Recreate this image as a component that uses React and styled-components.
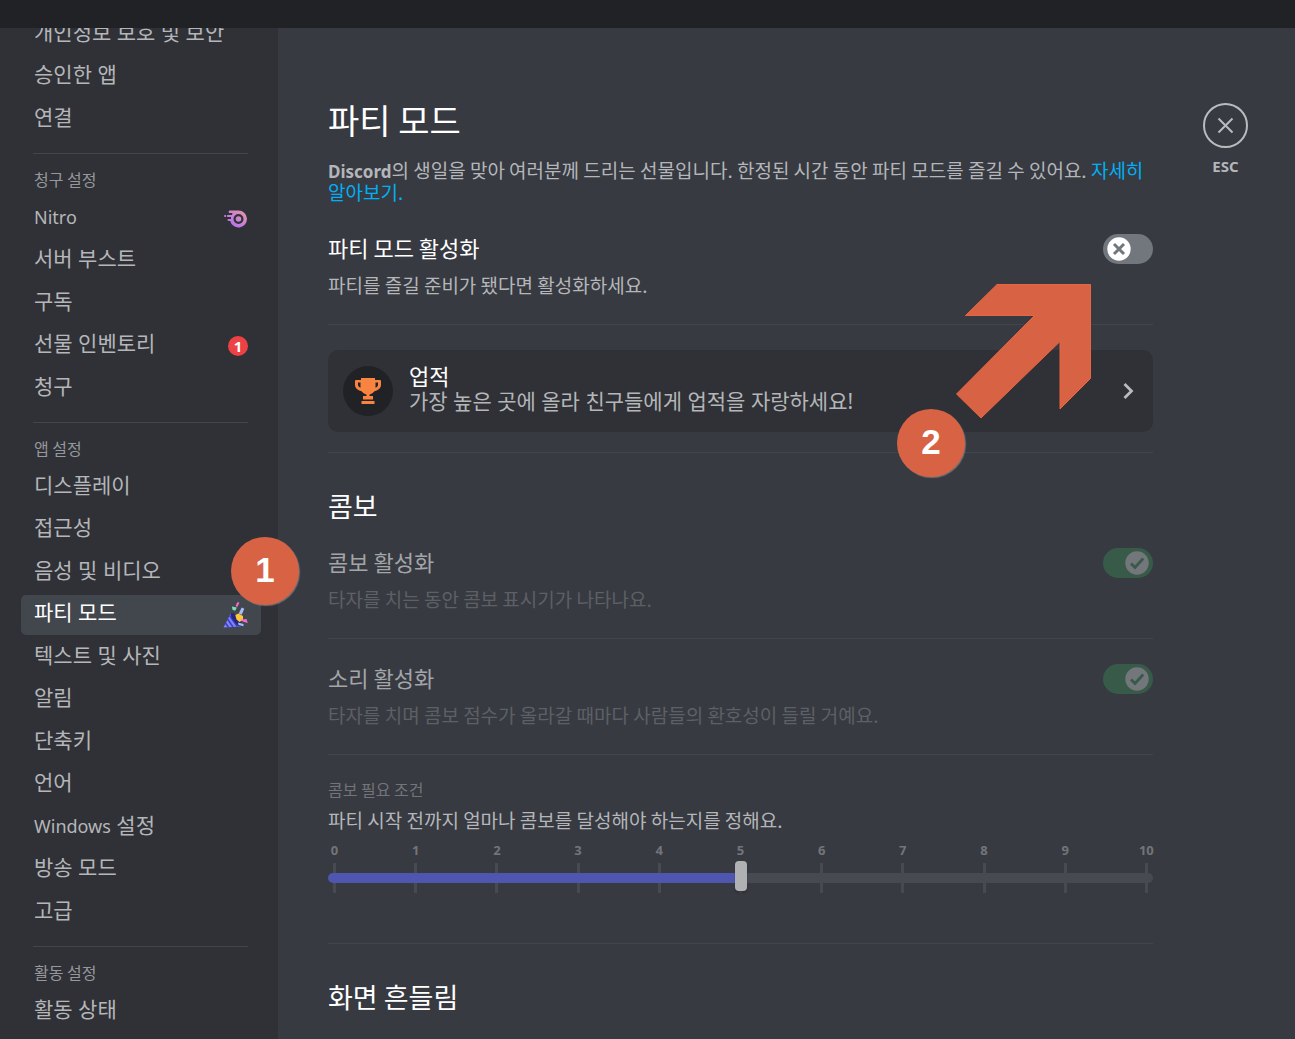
import React, { useState } from "react";
import styled, { createGlobalStyle, css } from "styled-components";

const billing = [
  { latin: "Nitro", icon: "nitro" },
  { label: "서버 부스트" },
  { label: "구독" },
  { label: "선물 인벤토리", count: 1 },
  { label: "청구" },
];

const appSettings = [
  { label: "디스플레이" },
  { label: "접근성" },
  { label: "음성 및 비디오" },
  { label: "파티 모드", icon: "party", selected: true },
  { label: "텍스트 및 사진" },
  { label: "알림" },
  { label: "단축키" },
  { label: "언어" },
  { latin: "Windows", label: " 설정" },
  { label: "방송 모드" },
  { label: "고급" },
];

const groups = [
  {
    items: [
      { label: "개인정보 보호 및 보안" },
      { label: "승인한 앱" },
      { label: "연결" },
    ],
  },
  { title: "청구 설정", items: billing },
  { title: "앱 설정", items: appSettings },
  { title: "활동 설정", items: [{ label: "활동 상태" }] },
];

const steps = [0, 1, 2, 3, 4, 5, 6, 7, 8, 9, 10];

const NitroIcon = () => (
  <svg width="24" height="18" viewBox="0 0 24 18" aria-hidden="true">
    <defs>
      <linearGradient id="nitro" x1="0" y1="1" x2="1" y2="0">
        <stop offset="0.2" stopColor="#b473f5" />
        <stop offset="0.9" stopColor="#e292aa" />
      </linearGradient>
    </defs>
    <path
      fill="url(#nitro)"
      fillRule="evenodd"
      d="M5.500 0.500H14.500a8.500 8.500 0 1 1-8.300 10.500H4.500a1 1 0 0 1 0-2H7V7H3.800a1 1 0 0 1 0-2H8L8.500 3H6.500a1.200 1.200 0 0 1-1-2.500zM14.500 4a5 5 0 1 0 0 10a5 5 0 0 0 0-10zM14.500 6.200a2.800 2.800 0 1 1 0 5.600a2.800 2.800 0 0 1 0-5.600zM0.300 5h1.700v2H0.300z"
    />
  </svg>
);

const PartyIcon = () => (
  <svg width="25" height="26" viewBox="0 0 25 26" aria-hidden="true">
    <path d="M8 11L18 24.500L0.500 25.500z" fill="#8084ff" />
    <path
      d="M6.500 13.500l8 11.300M4.500 17l5.500 8M2.500 21l3 4.300"
      stroke="#3f41c4"
      strokeWidth="1.700"
    />
    <path d="M8 11c2-.5 5 1.500 7.500 5s3.800 7 2.500 8.500c-2 .5-4.500-1.500-7-5S7 12.500 8 11z" fill="#25277c" />
    <path d="M12.300 13l3-1.500 4.700 2.500v4l-3.500 2-3-2.500z" fill="#fdc73a" />
    <path d="M15.700 11.500l3-6 2.600 1.200-2.600 6z" fill="#a4bdf8" />
    <path d="M12.500 4l2-4 2 .8-2.200 4.200z" fill="#f26bd0" />
    <path d="M9 4.500l4.800 1-1.600 3.200-2.700-1z" fill="#7ee0b8" />
    <path d="M17 17.800l6.500-.8 1.300 4-4.500-1.200z" fill="#f26bd0" />
    <path d="M15 20.500l5.500 1.500v2.200l-5-1.200z" fill="#a4bdf8" />
  </svg>
);

const TrophyIcon = () => (
  <svg width="26" height="26" viewBox="0 0 26 26" aria-hidden="true">
    <path
      fill="#f98441"
      fillRule="evenodd"
      d="M6 0h14v2h5a1 1 0 0 1 1 1v4c0 3-2.500 5-6.500 6.200C18.300 14.800 16.500 16 14.500 16.600V18h3.500v3.500H8V18h3.500v-1.400C9.500 16 7.700 14.800 6.500 13.200C2.500 12 0 10 0 7V3a1 1 0 0 1 1-1h5zM3 4.500V7c0 1 1 2 2.500 2.800V4.500zM23 4.500h-2.500v5.300C22 9 23 8 23 7zM6.500 23h13v3h-13z"
    />
  </svg>
);

const icons = { nitro: <NitroIcon />, party: <PartyIcon /> };

const Switch = ({ id, checked, onChange, disabled }) => (
  <SwitchBox $faded={disabled}>
    <SwitchInput
      id={id}
      type="checkbox"
      role="switch"
      checked={checked}
      onChange={onChange}
      disabled={disabled}
    />
    <Knob viewBox="0 0 24 24" $on={checked} aria-hidden="true">
      <circle cx="12" cy="12" r="11.700" fill="#fff" />
      {checked ? (
        <path d="M6 12.500l4 4L18.200 7.500" fill="none" stroke="#3ba55c" strokeWidth="2.800" />
      ) : (
        <path d="M7 7l10 10M17 7l-10 10" stroke="#72767d" strokeWidth="3" />
      )}
    </Knob>
  </SwitchBox>
);

const ToggleRow = ({ id, title, text, checked, onChange, disabled }) => (
  <Row>
    <RowHead>
      <RowTitle htmlFor={id} $dim={disabled}>{title}</RowTitle>
      <Switch id={id} checked={checked} onChange={onChange} disabled={disabled} />
    </RowHead>
    <RowText $dim={disabled}>{text}</RowText>
  </Row>
);

const App = () => {
  const [party, setParty] = useState(false);
  const [combo, setCombo] = useState(5);

  const toggleParty = () => setParty(!party);
  const updateCombo = (e) => setCombo(Number(e.target.value));

  return (
    <Page>
      <GlobalStyle />
      <TitleBar />
      <Body>
        <Sidebar>
          <Nav>
            {groups.map((group, i) => (
              <Group key={i}>
                {group.title && <GroupTitle>{group.title}</GroupTitle>}
                <List>
                  {group.items.map((item, j) => (
                    <Item key={j}>
                      <ItemLink href="#" $selected={item.selected}>
                        <ItemLabel>
                          {item.latin && <Latin>{item.latin}</Latin>}
                          {item.label}
                        </ItemLabel>
                        {item.icon && icons[item.icon]}
                        {item.count && <Count>{item.count}</Count>}
                      </ItemLink>
                    </Item>
                  ))}
                </List>
              </Group>
            ))}
          </Nav>
        </Sidebar>
        <Main>
          <Content>
            <Title>파티 모드</Title>
            <Intro>
              <b>Discord</b>의 생일을 맞아 여러분께 드리는 선물입니다. 한정된 시간 동안 파티
              모드를 즐길 수 있어요. <a href="#">자세히 알아보기.</a>
            </Intro>
            <ToggleRow
              id="party"
              title="파티 모드 활성화"
              text="파티를 즐길 준비가 됐다면 활성화하세요."
              checked={party}
              onChange={toggleParty}
            />
            <Card>
              <Trophy>
                <TrophyIcon />
              </Trophy>
              <CardBody>
                <CardTitle>업적</CardTitle>
                <CardText>가장 높은 곳에 올라 친구들에게 업적을 자랑하세요!</CardText>
              </CardBody>
              <svg width="12" height="18" viewBox="0 0 12 18" aria-hidden="true">
                <path d="M1.500 2l7 7-7 7" fill="none" stroke="#b9bbbe" strokeWidth="2.800" />
              </svg>
            </Card>
            <Rule />
            <SectionTitle>콤보</SectionTitle>
            <ToggleRow
              id="combo"
              title="콤보 활성화"
              text="타자를 치는 동안 콤보 표시기가 나타나요."
              checked
              disabled
            />
            <ToggleRow
              id="sound"
              title="소리 활성화"
              text="타자를 치며 콤보 점수가 올라갈 때마다 사람들의 환호성이 들릴 거예요."
              checked
              disabled
            />
            <SliderLabel htmlFor="need">콤보 필요 조건</SliderLabel>
            <SliderText>파티 시작 전까지 얼마나 콤보를 달성해야 하는지를 정해요.</SliderText>
            <Slider>
              <Marks>
                {steps.map((n) => (
                  <Mark key={n}>{n}</Mark>
                ))}
              </Marks>
              <Range
                id="need"
                type="range"
                min="0"
                max="10"
                value={combo}
                onChange={updateCombo}
                style={{ "--fill": `${combo * 10}%` }}
              />
            </Slider>
            <Rule />
            <SectionTitle>화면 흔들림</SectionTitle>
          </Content>
          <CloseArea>
            <CloseButton type="button" aria-label="닫기">
              <svg width="17" height="17" viewBox="0 0 17 17" aria-hidden="true">
                <path d="M1.500 1.500l14 14M15.500 1.500l-14 14" stroke="#b9bbbe" strokeWidth="2" />
              </svg>
            </CloseButton>
            <Esc>ESC</Esc>
          </CloseArea>
        </Main>
      </Body>
      <StepOne>1</StepOne>
      <StepTwo>2</StepTwo>
      <Arrow width="136" height="136" viewBox="0 0 136 136" aria-hidden="true">
        <path d="M41 1.500H134.500V95.500L104 126V58.500L25 135L0.500 111L78.500 32.500H9.500z" fill="#d86344" stroke="#ea6440" />
      </Arrow>
    </Page>
  );
};

export default App;

const GlobalStyle = createGlobalStyle`
  * {
    box-sizing: border-box;
  }
  body {
    margin: 0;
    background: #373a41;
    color: #b4b6b9;
    font-family: "Noto Sans CJK KR", sans-serif;
    font-size: 19px;
  }
  h1, h2, h3, p, ul {
    margin: 0;
    padding: 0;
    font-weight: 400;
  }
  a {
    text-decoration: none;
  }
`;

const Page = styled.div`
  position: relative;
  display: flex;
  flex-direction: column;
  height: 100vh;
  overflow: hidden;
`;

const TitleBar = styled.header`
  flex: none;
  height: 28px;
  background: #202225;
`;

const Body = styled.div`
  display: flex;
  flex: 1;
  min-height: 0;
`;

const Sidebar = styled.aside`
  flex: none;
  width: 278px;
  padding: 0 17px 0 21px;
  background: #2f3136;
  overflow: hidden;
`;

/* list is scrolled a little, the first row hides under the title bar */
const Nav = styled.nav`
  margin-top: -13px;
`;

const Group = styled.section`
  & + &::before {
    content: "";
    display: block;
    height: 1px;
    margin: 13px 13px 12px 12px;
    background: #42454a;
  }
`;

const GroupTitle = styled.h2`
  margin-bottom: 7px;
  padding: 0 13px;
  color: #96989d;
  font-size: 16px;
  line-height: 26px;
`;

const List = styled.ul`
  display: flex;
  flex-direction: column;
  gap: 2px;
  list-style: none;
`;

const Item = styled.li`
  &:nth-child(even):not(:last-child) {
    margin-bottom: 1px;
  }
`;

const ItemLink = styled.a`
  display: flex;
  align-items: center;
  justify-content: space-between;
  height: 40px;
  padding: 0 13px;
  border-radius: 5px;
  color: #b4b6b9;
  ${(props) =>
    props.$selected &&
    css`
      background: #42464d;
      color: #fff;
    `}
`;

const ItemLabel = styled.span`
  padding-bottom: 6px;
  font-family: "Noto Sans", "Noto Sans CJK KR", sans-serif;
  font-size: 21px;
  line-height: 30px;
`;

const Latin = styled.span`
  font-size: 18px;
`;

const Count = styled.span`
  width: 20px;
  height: 20px;
  border-radius: 10px;
  background: #ed4245;
  color: #fff;
  font: 700 15px/20px "Noto Sans", sans-serif;
  text-align: center;
`;

const Main = styled.main`
  display: flex;
  flex: 1;
  min-width: 0;
  background: #373a41;
`;

const Content = styled.div`
  flex: 1;
  min-width: 0;
  padding: 67px 0 0 50px;
`;

const Title = styled.h1`
  color: #fff;
  font-size: 34px;
  line-height: 50px;
`;

const Intro = styled.p`
  margin: 14px 0 31px;
  line-height: 22px;
  a {
    color: #00aff4;
  }
  b {
    font-family: "Noto Sans", sans-serif;
    font-size: 17px;
    line-height: 1;
  }
`;

const Rule = styled.hr`
  height: 1px;
  margin: 20px 0 0;
  border: 0;
  background: #42454a;
`;

const Row = styled.div`
  margin-bottom: 25px;
  padding-bottom: 28px;
  border-bottom: 1px solid #42454a;
`;

const RowHead = styled.div`
  display: flex;
  justify-content: space-between;
  height: 30px;
`;

const RowTitle = styled.label`
  color: ${(props) => (props.$dim ? "#a3a5a8" : "#fff")};
  font-size: 22px;
  line-height: 26px;
`;

const RowText = styled.p`
  margin-top: 9px;
  color: ${(props) => (props.$dim ? "#5d6065" : "#b4b6b9")};
  line-height: 23px;
`;

const SwitchBox = styled.span`
  display: grid;
  align-items: center;
  width: 50px;
  height: 30px;
  opacity: ${(props) => (props.$faded ? 0.3 : 1)};
`;

const SwitchInput = styled.input`
  grid-area: 1 / 1;
  appearance: none;
  width: 50px;
  height: 30px;
  margin: 0;
  border-radius: 15px;
  background: #72767d;
  &:checked {
    background: #3ba55c;
  }
`;

const Knob = styled.svg`
  grid-area: 1 / 1;
  justify-self: ${(props) => (props.$on ? "end" : "start")};
  width: 24px;
  height: 24px;
  margin: 0 4px;
  pointer-events: none;
`;

const Card = styled.div`
  display: flex;
  align-items: center;
  padding: 15px 18px 15px 15px;
  border-radius: 10px;
  background: #2f3136;
`;

const Trophy = styled.div`
  display: grid;
  place-items: center;
  width: 50px;
  height: 50px;
  border-radius: 50%;
  background: #202225;
`;

const CardBody = styled.div`
  flex: 1;
  height: 52px;
  margin: -3px 0 3px 16px;
`;

const CardTitle = styled.h3`
  color: #fff;
  font-size: 22px;
  line-height: 26px;
`;

const CardText = styled.p`
  font-family: "Noto Sans", "Noto Sans CJK KR", sans-serif;
  font-size: 21px;
  line-height: 26px;
`;

const SectionTitle = styled.h2`
  margin: 33px 0 22px;
  color: #fff;
  font-size: 27px;
  line-height: 40px;
`;

const SliderLabel = styled.label`
  display: block;
  color: #72757a;
  font-size: 16px;
  line-height: 18px;
`;

const SliderText = styled.p`
  margin: 10px 0 8px;
  line-height: 24px;
`;

const Slider = styled.div`
  display: grid;
  grid-template-rows: 20px 30px;
  row-gap: 3px;
  margin-bottom: 50px;
`;

const Marks = styled.div`
  grid-area: 1 / 1 / 3 / 2;
  display: flex;
  justify-content: space-between;
`;

const Mark = styled.span`
  display: flex;
  flex-direction: column;
  align-items: center;
  gap: 3px;
  width: 13px;
  color: #72757a;
  font: 700 13px/20px "Noto Sans", sans-serif;
  &::after {
    content: "";
    width: 3px;
    height: 30px;
    background: #474a50;
  }
`;

const Range = styled.input`
  grid-area: 2 / 1;
  appearance: none;
  width: 100%;
  height: 30px;
  margin: 0;
  background: none;
  &::-webkit-slider-runnable-track {
    height: 10px;
    border-radius: 5px;
    background: linear-gradient(to right, #4e56b0 var(--fill), #474a50 var(--fill));
  }
  &::-webkit-slider-thumb {
    appearance: none;
    width: 12px;
    height: 30px;
    margin-top: -12px;
    border-radius: 4px;
    background: #b0b1b3;
    box-shadow: 0 2px 2px rgba(0, 0, 0, 0.2);
  }
`;

const CloseArea = styled.div`
  flex: none;
  display: flex;
  flex-direction: column;
  align-items: center;
  width: 142px;
  padding: 75px 47px 0 50px;
`;

const CloseButton = styled.button`
  display: grid;
  place-items: center;
  width: 45px;
  height: 45px;
  padding: 0;
  border: 2px solid #b9bbbe;
  border-radius: 50%;
  background: none;
`;

const Esc = styled.span`
  margin-top: 7px;
  font: 700 15px/22px "Noto Sans", sans-serif;
`;

const Step = styled.div`
  position: absolute;
  width: 68px;
  height: 68px;
  border-radius: 50%;
  background: #d86344;
  box-shadow: 1px 1px 1px rgba(150, 150, 150, 0.6);
  color: #fff;
  font: 700 35px/66px "Liberation Sans", sans-serif;
  text-align: center;
`;

const StepOne = styled(Step)`
  top: 537px;
  left: 231px;
`;

const StepTwo = styled(Step)`
  top: 409px;
  right: 330px;
`;

const Arrow = styled.svg`
  position: absolute;
  top: 283px;
  right: 203px;
  pointer-events: none;
`;
